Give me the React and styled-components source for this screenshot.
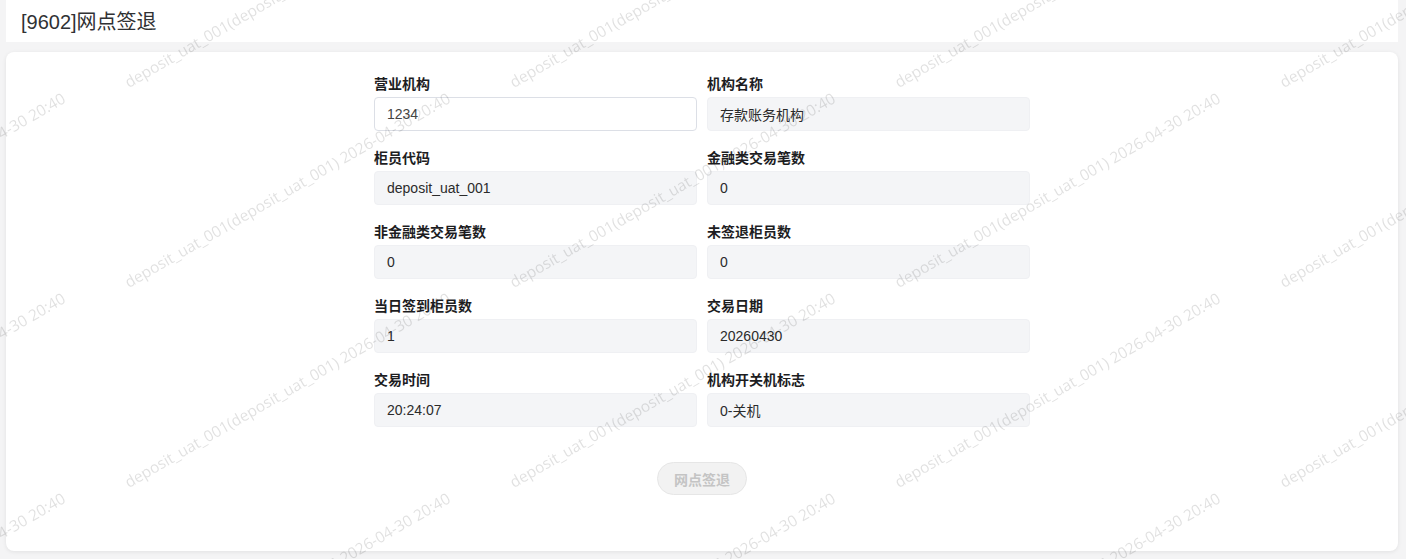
import React from 'react'
import styled, { createGlobalStyle } from 'styled-components'

const WATERMARK = 'deposit_uat_001(deposit_uat_001) 2026-04-30 20:40'

const fields = [
  { label: '营业机构', value: '1234', editable: true },
  { label: '机构名称', value: '存款账务机构' },
  { label: '柜员代码', value: 'deposit_uat_001' },
  { label: '金融类交易笔数', value: '0' },
  { label: '非金融类交易笔数', value: '0' },
  { label: '未签退柜员数', value: '0' },
  { label: '当日签到柜员数', value: '1' },
  { label: '交易日期', value: '20260430' },
  { label: '交易时间', value: '20:24:07' },
  { label: '机构开关机标志', value: '0-关机' },
]

const GlobalStyle = createGlobalStyle`
  html, body {
    margin: 0;
    padding: 0;
    background: #f4f4f5;
    font-family: "Liberation Sans", "Noto Sans CJK SC", sans-serif;
  }
`

const App = () => {
  const [orgCode, setOrgCode] = React.useState('1234')

  return (
    <>
      <GlobalStyle />
      <Page>
        <Header>[9602]网点签退</Header>
        <Card>
          <FormGrid>
            {fields.map((f) => (
              <Field key={f.label}>
                <Label>{f.label}</Label>
                {f.editable ? (
                  <Input value={orgCode} onChange={(e) => setOrgCode(e.target.value)} />
                ) : (
                  <Input value={f.value} readOnly $disabled />
                )}
              </Field>
            ))}
          </FormGrid>
          <Actions>
            <SubmitButton disabled>网点签退</SubmitButton>
          </Actions>
        </Card>
      </Page>
      {/* 水印层 */}
      <Watermark>
        <WatermarkGrid>
          {Array.from({ length: 24 }).map((_, i) => (
            <WatermarkCell key={i}>
              <WatermarkText>{WATERMARK}</WatermarkText>
            </WatermarkCell>
          ))}
        </WatermarkGrid>
      </Watermark>
    </>
  )
}

export default App

const Page = styled.div`
  display: flex;
  flex-direction: column;
  gap: 10px;
  padding: 0 8px 9px 6px;
  min-height: 559px;
  box-sizing: border-box;
`

const Header = styled.div`
  height: 42px;
  background: #fff;
  display: flex;
  align-items: center;
  padding: 0 15px 2px;
  box-sizing: border-box;
  font-size: 20px;
  color: #303133;
`

const Card = styled.div`
  background: #fff;
  border-radius: 8px;
  box-shadow: 0 1px 4px rgba(0, 0, 0, 0.08);
  padding: 23px 0 56px;
  display: flex;
  flex-direction: column;
  align-items: center;
`

const FormGrid = styled.div`
  display: grid;
  grid-template-columns: 323px 323px;
  column-gap: 10px;
`

const Field = styled.div`
  display: flex;
  flex-direction: column;
  margin-bottom: 18px;
`

const Label = styled.label`
  font-size: 14px;
  line-height: 18px;
  font-weight: bold;
  color: #1d1d1f;
  margin-bottom: 4px;
`

const Input = styled.input`
  height: 34px;
  box-sizing: border-box;
  padding: 0 12px;
  font-family: inherit;
  font-size: 14px;
  color: ${(p) => (p.$disabled ? '#2b2b2b' : '#444')};
  background: ${(p) => (p.$disabled ? '#f4f5f7' : '#fff')};
  border: 1px solid ${(p) => (p.$disabled ? '#eff0f3' : '#dcdfe6')};
  border-radius: 4px;
  outline: none;
`

const Actions = styled.div`
  display: flex;
  justify-content: center;
  margin-top: 17px;
`

const SubmitButton = styled.button`
  width: 90px;
  height: 33px;
  border-radius: 17px;
  border: 1px solid #e6e6e6;
  background: #f2f2f2;
  color: #c4c4c4;
  font-family: inherit;
  font-size: 14px;
  font-weight: bold;
  cursor: not-allowed;
`

const Watermark = styled.div`
  position: fixed;
  inset: 0;
  overflow: hidden;
  pointer-events: none;
  z-index: 10;
`

const WatermarkGrid = styled.div`
  display: grid;
  grid-template-columns: repeat(6, 385px);
  grid-auto-rows: 200px;
  margin: -110px 0 0 -255px;
`

const WatermarkCell = styled.div`
  display: flex;
  align-items: flex-end;
`

const WatermarkText = styled.span`
  display: block;
  white-space: nowrap;
  font-family: "Open Sans", sans-serif;
  font-size: 15.5px;
  line-height: 1;
  color: rgba(0, 0, 0, 0.12);
  transform-origin: 0 100%;
  transform: rotate(-30deg);
`
